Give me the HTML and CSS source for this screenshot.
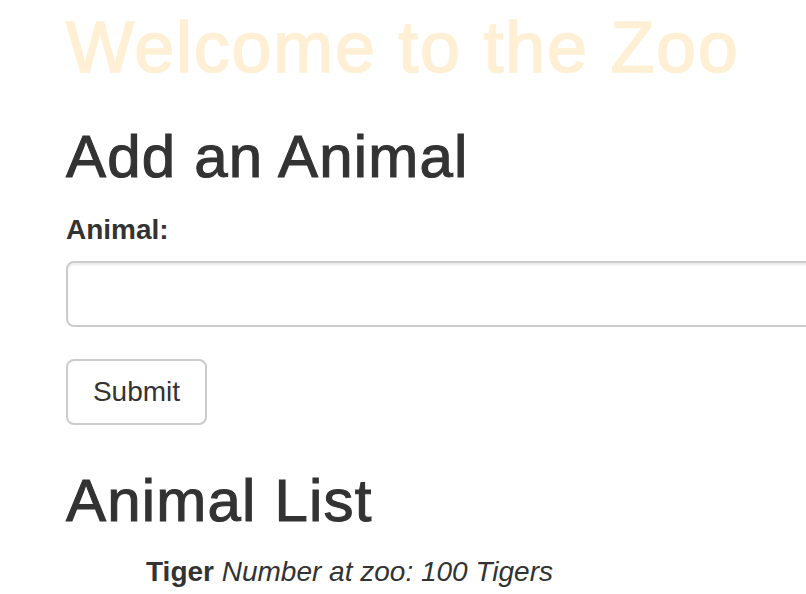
FILE: index.html
```html
<!DOCTYPE html>
<html>
<head>
<meta charset="utf-8">
<link rel="stylesheet" href="styles.css">
</head>
<body>
<div class="page">
  <h1 class="title">Welcome to the Zoo</h1>
  <h2 class="section add-title">Add an Animal</h2>
  <form class="form">
    <div class="form-group">
      <label class="label" for="animal">Animal:</label>
      <input class="input" id="animal" type="text">
    </div>
    <button class="btn" type="button">Submit</button>
  </form>
  <h2 class="section list-title">Animal List</h2>
  <ul class="animals">
    <li class="animal"><b class="name">Tiger</b> <i class="count">Number at zoo: 100 Tigers</i></li>
  </ul>
</div>
</body>
</html>
```
FILE: styles.css
```css
html, body {
  margin: 0;
  padding: 0;
  background: #fff;
}
body {
  font-family: "Liberation Sans", Arial, Helvetica, sans-serif;
  color: #333;
}
.page {
  padding: 7px 0 0 66px;
  overflow: hidden;
  height: 594px;
  box-sizing: border-box;
}
.title {
  margin: 0;
  font-size: 72px;
  line-height: 80px;
  font-weight: 500;
  color: #ffefd5;
  -webkit-text-stroke: 1.6px #ffefd5;
  letter-spacing: 1.7px;
  white-space: nowrap;
}
.section {
  margin: 0;
  font-size: 60px;
  line-height: 66px;
  font-weight: 500;
  color: #333;
  -webkit-text-stroke: 1.1px #333;
  letter-spacing: 1.2px;
  white-space: nowrap;
}
.add-title {
  margin-top: 37px;
}
.form {
  margin: 0;
}
.form-group {
  margin-top: 20px;
}
.label {
  display: block;
  font-size: 28px;
  line-height: 40px;
  font-weight: 700;
  margin-bottom: 11px;
}
.input {
  display: block;
  width: 780px;
  height: 66px;
  box-sizing: border-box;
  border: 2px solid #ccc;
  border-radius: 8px;
  background: #fff;
  box-shadow: inset 0 2px 2px rgba(0, 0, 0, 0.075);
  padding: 12px 24px;
  font-size: 28px;
  font-family: inherit;
  margin: 0;
}
.btn {
  display: flex;
  align-items: center;
  justify-content: center;
  margin-top: 32px;
  width: 141px;
  height: 66px;
  box-sizing: border-box;
  border: 2px solid #ccc;
  border-radius: 8px;
  background: #fff;
  color: #333;
  font-family: inherit;
  font-size: 28px;
  padding: 0 24px;
}
.list-title {
  margin-top: 43px;
}
.animals {
  list-style: none;
  margin: 18px 0 0 0;
  padding: 0 0 0 80px;
}
.animal {
  font-size: 28px;
  line-height: 40px;
  white-space: nowrap;
}
.name {
  font-weight: 700;
}
.count {
  font-style: italic;
}
```
